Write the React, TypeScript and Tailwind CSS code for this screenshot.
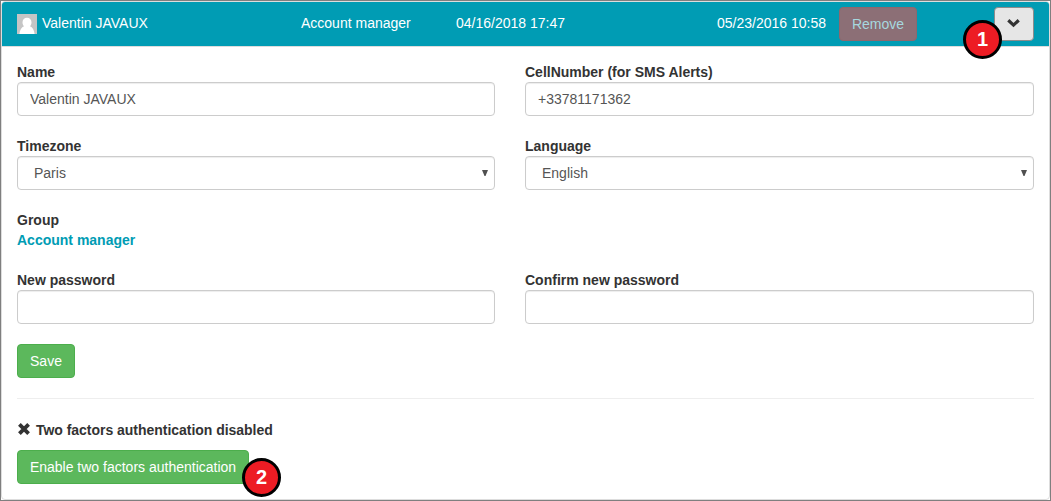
import type { ReactNode } from "react";

const control =
  "block h-[34px] w-full appearance-none rounded-[4px] border border-[#ccc] bg-white text-sm text-[#555] shadow-[inset_0_1px_1px_rgba(0,0,0,0.075)] outline-none";

function Field({ label, children }: { label: string; children: ReactNode }) {
  return (
    <label className="block">
      <span className="block font-bold">{label}</span>
      {children}
    </label>
  );
}

function TextInput({ value = "", type = "text" }: { value?: string; type?: string }) {
  return <input type={type} defaultValue={value} className={`${control} px-3`} />;
}

function Select({ value }: { value: string }) {
  return (
    <span className="relative block">
      <select className={`${control} px-4`} defaultValue={value}>
        <option>{value}</option>
      </select>
      <svg className="pointer-events-none absolute top-[14px] right-[7px] h-[6px] w-[6px]" viewBox="0 0 6 6" fill="#505050">
        <path d="M0 0h6L3.5 6h-1z" />
      </svg>
    </span>
  );
}

function Marker({ n, className }: { n: number; className: string }) {
  return (
    <span
      className={`absolute z-10 flex h-[39px] w-[39px] items-center justify-center rounded-full border-[3px] border-black bg-[#ed1c24] pb-[2px] text-[20px] leading-none font-bold text-white ${className}`}
    >
      {n}
    </span>
  );
}

function Avatar() {
  return (
    <svg className="h-5 w-5 shrink-0" viewBox="0 0 20 20">
      <path fill="#c5c5c5" d="M0 0h20v20H0z" />
      <path
        fill="#fff"
        d="M10 3.8c-2.6 0-4.5 1.9-4.5 4.4 0 1.8.6 3.1 1.5 4-2.5.9-4.2 3.6-4.6 7.8h15.2c-.4-4.2-2.1-6.9-4.6-7.8.9-.9 1.5-2.2 1.5-4 0-2.5-1.9-4.4-4.5-4.4z"
      />
    </svg>
  );
}

export default function App() {
  return (
    <div className="h-[501px] w-[1051px] overflow-hidden border border-[#7f7f7f] bg-white font-['Liberation_Sans',Arial,sans-serif] text-sm leading-5 text-[#333]">
      <div className="h-full rounded-[4px] border border-[#ddd]">
        <header className="flex h-[45px] items-center rounded-t-[3px] border-b border-[#ddd] bg-[#009cb4] px-[15px] text-white">
          <div className="flex w-[284px] items-center gap-[5px]">
            <Avatar />
            <span className="relative -top-px">Valentin JAVAUX</span>
          </div>
          <span className="relative -top-px w-[155px]">Account manager</span>
          <span className="relative -top-px w-[261px]">04/16/2018 17:47</span>
          <span className="relative -top-px w-[122px]">05/23/2016 10:58</span>
          <button className="h-[34px] w-[78px] rounded-[4px] border border-[#8d686e] bg-[#8c6f76] text-[#a6d8df]">
            Remove
          </button>
          <div className="relative ml-auto">
            <button className="flex h-[34px] w-10 items-center justify-center rounded-[4px] border border-[#8c8c8c] bg-[#e6e6e6]">
              <svg className="relative -top-px -left-px h-[9px] w-[13px]" viewBox="0 0 13 9" fill="none" stroke="#333" strokeWidth="3.2">
                <path d="M1.3 1.3 6.5 6.1l5.2-4.8" />
              </svg>
            </button>
            <Marker n={1} className="top-[13px] -left-[31px]" />
          </div>
        </header>

        <main className="px-[15px] pt-[15px]">
          <form>
            <div className="grid grid-cols-[478px_509px] gap-x-[30px] gap-y-5">
              <Field label="Name">
                <TextInput value="Valentin JAVAUX" />
              </Field>
              <Field label="CellNumber (for SMS Alerts)">
                <TextInput value="+33781171362" />
              </Field>
              <Field label="Timezone">
                <Select value="Paris" />
              </Field>
              <Field label="Language">
                <Select value="English" />
              </Field>
              <div className="col-span-2 font-bold">
                <div>Group</div>
                <a className="text-[#009cb4]">Account manager</a>
              </div>
              <Field label="New password">
                <TextInput type="password" />
              </Field>
              <Field label="Confirm new password">
                <TextInput type="password" />
              </Field>
            </div>
            <button type="button" className="mt-5 block h-[34px] w-[58px] rounded-[4px] border border-[#4cae4c] bg-[#5cb85c] text-white">
              Save
            </button>
          </form>
          <hr className="mt-5 mb-[21px] border-t border-[#eee]" />
          <p className="flex items-center font-bold">
            <svg className="relative -top-px mr-[6px] ml-px h-[12px] w-[12px]" viewBox="0 0 12 12" stroke="#333" strokeWidth="3.8">
              <path d="m1.4 1.4 9.2 9.2M10.6 1.4l-9.2 9.2" />
            </svg>
            <span className="tracking-[-0.03px]">Two factors authentication disabled</span>
          </p>
          <div className="relative mt-[10px] w-[232px]">
            <button className="block h-[34px] w-full rounded-[4px] border border-[#4cae4c] bg-[#5cb85c] text-white">
              Enable two factors authentication
            </button>
            <Marker n={2} className="top-[8px] left-[225px]" />
          </div>
        </main>
      </div>
    </div>
  );
}
